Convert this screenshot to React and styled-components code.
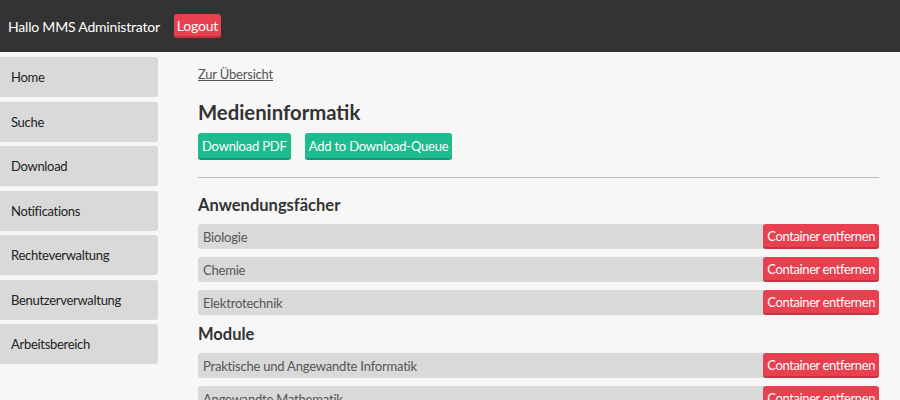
import styled, { createGlobalStyle } from "styled-components";

const GlobalStyle = createGlobalStyle`
  body {
    margin: 0;
    background: #f7f7f7;
    font-family: "Lato", "Liberation Sans", sans-serif;
    color: #333;
  }
`;

const Header = styled.header`
  height: 52px;
  background: #333333;
  display: flex;
  align-items: center;
  gap: 14px;
  padding-left: 8px;
  color: #fff;
  font-size: 14px;
  letter-spacing: -0.2px;
`;

const Btn = styled.button`
  font-family: inherit;
  font-size: ${(p) => p.$size || 13}px;
  letter-spacing: ${(p) => p.$ls ?? -0.4}px;
  color: #fff;
  background: ${(p) => (p.$green ? "#1dbb8d" : "#e8404f")};
  border: none;
  border-bottom: 2px solid ${(p) => (p.$green ? "#16977a" : "#c23343")};
  border-radius: 3px;
  padding: 0 ${(p) => p.$px || 4}px;
  height: ${(p) => p.$h || 25}px;
  cursor: pointer;
  white-space: nowrap;
`;

const Layout = styled.div`
  display: flex;
  align-items: flex-start;
`;

const Sidebar = styled.nav`
  width: 158px;
  flex: none;
  padding-top: 5px;
  display: flex;
  flex-direction: column;
  gap: 4.5px;
`;

const NavItem = styled.a`
  height: 40px;
  background: #d9d9d9;
  border-radius: 0 3px 3px 0;
  display: flex;
  align-items: center;
  padding-left: 11px;
  font-size: 13px;
  letter-spacing: -0.3px;
  color: #222;
`;

const Main = styled.main`
  flex: 1;
  padding: 14px 21px 0 40px;
`;

const BackLink = styled.a`
  display: block;
  font-size: 13px;
  letter-spacing: -0.2px;
  color: #555;
  text-decoration: underline;
  line-height: 16px;
`;

const Title = styled.h1`
  font-size: 20.3px;
  font-weight: 700;
  margin: 17px 0 0;
  line-height: 26px;
  color: #333;
`;

const Actions = styled.div`
  display: flex;
  gap: 14px;
  margin-top: 8px;
`;

const Rule = styled.hr`
  border: none;
  border-top: 1px solid #bbb;
  margin: 17px 0 0;
`;

const Section = styled.h2`
  font-size: 16.5px;
  font-weight: 700;
  margin: ${(p) => p.$mt || 16}px 0 8px;
  line-height: 22px;
  color: #333;
`;

const List = styled.div`
  display: flex;
  flex-direction: column;
  gap: 8px;
`;

const Row = styled.div`
  height: 25px;
  background: #d9d9d9;
  border-radius: 3px;
  display: flex;
  align-items: center;
  justify-content: space-between;
  padding-left: 5px;
  font-size: 13px;
  letter-spacing: -0.2px;
  color: #555;
`;

const navItems = [
  "Home",
  "Suche",
  "Download",
  "Notifications",
  "Rechteverwaltung",
  "Benutzerverwaltung",
  "Arbeitsbereich",
];

const sections = [
  { title: "Anwendungsfächer", items: ["Biologie", "Chemie", "Elektrotechnik"], mt: 16 },
  { title: "Module", items: ["Praktische und Angewandte Informatik", "Angewandte Mathematik"], mt: 8 },
];

export default function App() {
  return (
    <>
      <GlobalStyle />
      <Header>
        <span>Hallo MMS Administrator</span>
        <Btn $size={14} $ls={-0.2} $h={24} $px={3}>Logout</Btn>
      </Header>
      <Layout>
        <Sidebar>
          {navItems.map((n) => (
            <NavItem key={n}>{n}</NavItem>
          ))}
        </Sidebar>
        <Main>
          <BackLink>Zur Übersicht</BackLink>
          <Title>Medieninformatik</Title>
          <Actions>
            <Btn $green $h={27} $ls={-0.2}>Download PDF</Btn>
            <Btn $green $h={27} $ls={-0.2}>Add to Download-Queue</Btn>
          </Actions>
          <Rule />
          {sections.map((s) => (
            <div key={s.title}>
              <Section $mt={s.mt}>{s.title}</Section>
              <List>
                {s.items.map((i) => (
                  <Row key={i}>
                    <span>{i}</span>
                    <Btn>Container entfernen</Btn>
                  </Row>
                ))}
              </List>
            </div>
          ))}
        </Main>
      </Layout>
    </>
  );
}
